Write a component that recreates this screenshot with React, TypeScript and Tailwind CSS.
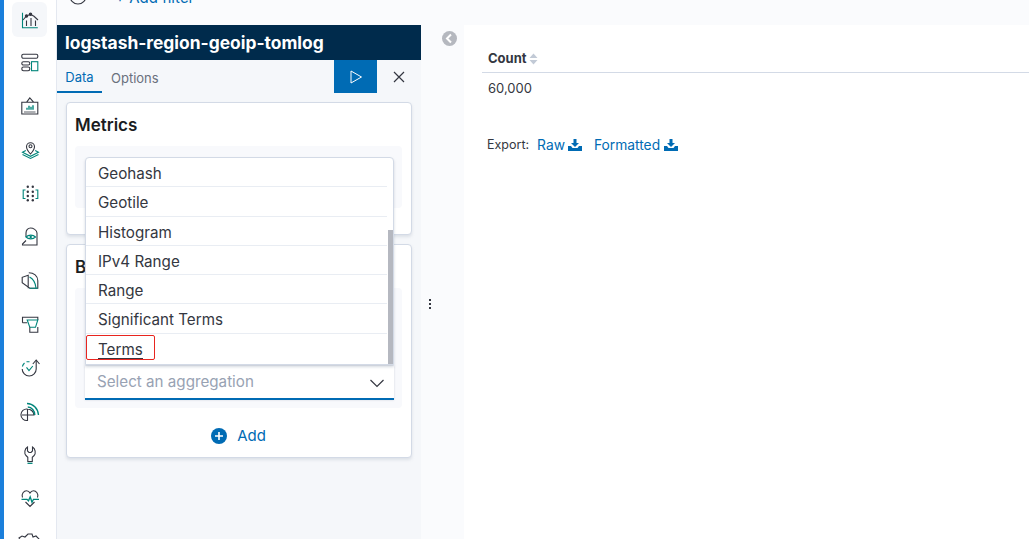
import React from "react";

const D = "#343741";
const T = "#00857a";

function Ic({ children }: { children: React.ReactNode }) {
  return (
    <svg width="24" height="24" viewBox="0 0 24 24" fill="none" strokeWidth="1.1" stroke={D}>
      {children}
    </svg>
  );
}

const icons: React.ReactNode[] = [
  <Ic key="a">
    <path d="M4.500 4.700v15h15.300" stroke={T} />
    <path d="M5 12l3.500-4 4-1.700 3.500 2 4 3.700" />
    <circle cx="8.500" cy="8" r="1.200" fill={D} />
    <circle cx="12.500" cy="6.300" r="1.200" fill={D} />
    <path d="M8.500 12.500V18M13 10v8M17.500 12.500V18" />
  </Ic>,
  <Ic key="b">
    <rect x="3.800" y="3.300" width="16" height="4" rx="1.500" />
    <rect x="3.800" y="10.700" width="8" height="3.300" rx="1.600" />
    <rect x="3.800" y="16" width="8" height="3.700" rx="1.700" />
    <rect x="13.500" y="10.700" width="6.300" height="9" stroke={T} />
  </Ic>,
  <Ic key="c">
    <path d="M3.800 8.300h16V20h-16zM8.500 8.300l3.300-4.500 4 4.500" />
    <path d="M9 15.700v-2M11 15.700v-4M13 15.700v-3M15 15.700v-4.500" stroke={T} strokeWidth="1.400" />
    <path d="M6 18h11.500" strokeWidth="0.800" />
  </Ic>,
  <Ic key="d">
    <path d="M12.500 16c-2.500-2.800-4-4.800-4-7.300a4 4 0 018 0c0 2.500-1.500 4.500-4 7.300z" />
    <circle cx="12.500" cy="8.300" r="1.500" />
    <path d="M7.800 12.500L4.500 14.300l8 4 8-4-3.300-1.800" stroke={T} />
    <path d="M4.500 16.500l8 4 8-4" stroke={T} />
  </Ic>,
  <Ic key="e">
    <g fill={D} stroke="none">
      <circle cx="9.800" cy="4.700" r="1.200" />
      <circle cx="14.800" cy="4.700" r="1.200" />
      <circle cx="9.800" cy="9.800" r="1.200" />
      <circle cx="14.800" cy="9.800" r="1.200" />
      <circle cx="9.800" cy="14" r="1.200" />
      <circle cx="14.800" cy="14" r="1.200" />
      <circle cx="9.800" cy="18.300" r="1.200" />
      <circle cx="14.800" cy="18.300" r="1.200" />
    </g>
    <path d="M7.500 8H5.200v8.500h2.300M17.500 8h2.300v8.500h-2.300" stroke={T} />
  </Ic>,
  <Ic key="f">
    <path d="M8 12V8c0-3 2-5 4.500-5S19 5 19 8v12H4.500v-1L8 15.500" />
    <path d="M8 12c2.500-2.500 7-2.500 9.500 0-2.500 2.500-7 2.500-9.500 0z" stroke={T} />
    <circle cx="12.700" cy="12" r="1.200" fill={T} stroke="none" />
  </Ic>,
  <Ic key="g">
    <path d="M10.800 3.700c5 0 9 3 9 8v7.600h-8l-7.600-5.600V8.300l6-2v13" />
    <path d="M11.500 8c4 2 6 6 6.500 11M11.500 19.300h8.300" stroke={T} />
  </Ic>,
  <Ic key="h">
    <path d="M4.500 9.700V4.300h15.300V7M4.500 9.700h4.700" />
    <path d="M9.200 7h10.600l-2.300 7.300h-5.700z" stroke={T} />
    <path d="M11.800 14.300v5h8V14" />
  </Ic>,
  <Ic key="i">
    <path d="M18.200 4.500V13a7 7 0 01-14 0" />
    <path d="M14.800 8l3.400-4 3.300 4" />
    <path d="M4.400 10.500A7 7 0 016.500 7M8.500 5.700h3" stroke={T} />
    <path d="M8.500 11.300l2.500 3.400 3.800-4.700" stroke={T} />
  </Ic>,
  <Ic key="j">
    <path d="M9.500 9a5.800 5.800 0 100 11.500V15H4M9.500 9v6H16a6.500 6.500 0 00-6.500-6" />
    <path d="M9 3.500c6 0 11 5 11.500 11.500M9.800 7c4 0 7 4 7 8" stroke={T} strokeWidth="1.400" />
  </Ic>,
  <Ic key="k">
    <path d="M9.500 3C6.500 4.500 6 9.500 8 11.500l1.800 1.800v4.200h4.500v-4.200l1.800-1.800C18 9.500 17.500 4.500 14.500 3v4L13 8.500h-2L9.500 7z" />
    <path d="M9.500 19.300h5" stroke={T} strokeWidth="1.300" />
  </Ic>,
  <Ic key="l">
    <path d="M4.500 10.500C3 7 6 3.700 8.500 3.700c1.500 0 2.800.8 3.500 2.300.8-1.500 2-2.300 3.500-2.300C18 3.700 21 7 19.500 10.500M7.500 15l4.500 4.500 4.500-4.500" />
    <path d="M3.500 12.300h5.500l1.500 1.500 1.700-4 1.800 5.500 1.500-3h5.500" stroke={T} strokeWidth="1.300" />
  </Ic>,
  <Ic key="m">
    <path d="M10 3h4l1 3 3-1 3 3-2 3 2 2v3l-3 1 1 3-3 2-3-2-1 3h-4l-1-3-3 2-3-3 2-3-3-1v-4l3-1-2-3 3-2 3 1z" />
  </Ic>,
];

const items = ["Geohash", "Geotile", "Histogram", "IPv4 Range", "Range", "Significant Terms"];

function DownloadIcon({ className }: { className: string }) {
  return (
    <svg width="14" height="12" viewBox="0 0 14 12" fill="#006bb4" className={className}>
      <path d="M5.500 0h3v4H11L7 8 3 4h2.500z" />
      <path d="M0 7h3l1.500 2h5L11 7h3v5H0z" />
    </svg>
  );
}

export default function App() {
  return (
    <div
      className="flex h-[539px] w-[1029px] overflow-hidden bg-[#f5f7fa] text-[14px] text-[#343741]"
      style={{ fontFamily: "Inter, 'Liberation Sans', sans-serif" }}
    >
      <div className="w-[4px] shrink-0 bg-[#1b7fdb]" />
      <nav className="flex h-[539px] w-[53px] shrink-0 flex-col items-center overflow-hidden border-r border-[#e4e8f0] bg-white pr-[1px] pt-[2px]">
        <div className="flex flex-col items-center">
          <div className="flex h-[35px] w-[35px] items-center justify-center rounded-[6px] bg-[#f5f7fa]">
            {icons[0]}
          </div>
          <div className="mt-[13.500px] flex flex-col gap-[19.700px]">{icons.slice(1)}</div>
        </div>
      </nav>

      <div className="flex min-w-0 flex-1 flex-col">
        <div className="relative flex h-[25px] shrink-0 items-end overflow-hidden bg-[#fafbfd]">
          <svg width="18" height="18" viewBox="0 0 18 18" fill="none" stroke={D} className="absolute left-[12px] top-[-13px]">
            <circle cx="9" cy="9" r="8" strokeWidth="1.200" />
            <path d="M9 6v5" strokeWidth="1.200" />
          </svg>
          <span className="absolute left-[58px] top-[-12px] text-[15px] leading-[20px] text-[#006bb4]">+ Add filter</span>
        </div>
        <div className="flex min-h-0 flex-1">
          <aside className="flex w-[364px] shrink-0 flex-col bg-[#f5f7fa]">
            <div className="flex h-[35px] items-center bg-[#002b4c] pl-[8px] pt-[1px] text-[17.400px] font-bold text-white">
              logstash-region-geoip-tomlog
            </div>
            <div className="flex h-[33px] items-stretch">
              <div className="flex h-[33px] w-[45px] items-center justify-center border-b-2 border-[#006bb4] pt-[5px] text-[13px] text-[#006bb4]">
                Data
              </div>
              <div className="ml-[9px] flex items-center pt-[5px] text-[13px] text-[#69707d]">Options</div>
              <div className="ml-auto flex h-[33px] w-[43px] items-center justify-center bg-[#006bb4]">
                <svg width="16" height="16" viewBox="0 0 16 16" fill="none" stroke="#fff" strokeWidth="1">
                  <path d="M3 2l10.500 6L3 14z" />
                </svg>
              </div>
              <div className="flex w-[44px] items-center justify-center">
                <svg width="12" height="12" viewBox="0 0 12 12" fill="none" stroke={D} strokeWidth="1.200">
                  <path d="M1 1l10 10M11 1L1 11" />
                </svg>
              </div>
            </div>

            <div className="relative mt-[9px] flex flex-col gap-[9px] px-[9px]">
              <section className="h-[133px] rounded-[4px] border border-[#d3dae6] bg-white pl-[8px] pr-[9px] shadow-[0_2px_3px_rgba(152,162,179,0.25)]">
                <h2 className="mt-[10px] text-[17px] font-semibold leading-[24px] text-[#1a1c21]">Metrics</h2>
                <div className="mt-[9px] h-[62px] rounded-[4px] bg-[#f8f9fc]" />
              </section>

              <section className="h-[214px] rounded-[4px] border border-[#d3dae6] bg-white pl-[8px] pr-[9px] shadow-[0_2px_3px_rgba(152,162,179,0.25)]">
                <h2 className="mt-[10px] text-[17px] font-semibold leading-[24px] text-[#1a1c21]">Buckets</h2>
                <div className="mt-[9px] flex h-[120px] flex-col justify-end rounded-[4px] bg-[#f8f9fc] pb-[8px] pl-[10px] pr-[8px]">
                  <div className="flex h-[34px] items-center justify-between border-b-2 border-[#006bb4] bg-white pl-[12px] pr-[9px] pt-[1px] shadow-[0_0_2px_rgba(152,162,179,0.4)]">
                    <span className="text-[15.200px] text-[#98a2b3]">Select an aggregation</span>
                    <svg width="16" height="16" viewBox="0 0 16 16" fill="none" stroke={D} strokeWidth="1.200">
                      <path d="M1.500 5l6.500 6.500L14.500 5" />
                    </svg>
                  </div>
                </div>
                <div className="mt-[17px] flex items-center justify-center gap-[10px]">
                  <svg width="16" height="16" viewBox="0 0 16 16">
                    <circle cx="8" cy="8" r="8" fill="#006bb4" />
                    <path d="M8 4v8M4 8h8" stroke="#fff" strokeWidth="1.600" />
                  </svg>
                  <span className="text-[15px] text-[#006bb4]">Add</span>
                </div>
              </section>

              <div className="absolute left-[28px] top-[55px] h-[208px] w-[309px] overflow-hidden rounded-t-[4px] border border-[#d3dae6] bg-white pl-[12px] shadow-[0_2px_3px_rgba(152,162,179,0.4)]">
                <div className="absolute bottom-0 right-0 top-[72px] w-[5px] bg-[#b5b8c0]" />
                <div className="mr-[6px]">
                  {items.map((t) => (
                    <div
                      key={t}
                      className="-ml-[12px] flex h-[29.300px] items-center border-b border-[#e9edf3] pl-[12px] pt-[4.500px] text-[15.200px] text-[#343741]"
                    >
                      {t}
                    </div>
                  ))}
                  <div className="relative flex h-[31px] items-center pt-[3px]">
                    <span className="border-b border-[#343741] text-[15.200px] leading-[16px]">Terms</span>
                    <div className="absolute left-[-12px] top-[1px] h-[25px] w-[69px] rounded-[2px] border border-[#e8251f]" />
                  </div>
                </div>
              </div>
            </div>
          </aside>

          <div className="relative w-[43px] shrink-0 bg-[#fafbfd]">
            <svg width="15" height="15" viewBox="0 0 15 15" className="absolute left-[21px] top-[6px]">
              <circle cx="7.500" cy="7.500" r="7.500" fill="#b5b8bf" />
              <path d="M9 3.500l-4 4 4 4" fill="none" stroke="#fff" strokeWidth="2" />
            </svg>
            <div className="absolute left-[8px] top-[274px] flex flex-col gap-[2px]">
              <span className="h-[2px] w-[2px] bg-[#343741]" />
              <span className="h-[2px] w-[2px] bg-[#343741]" />
              <span className="h-[2px] w-[2px] bg-[#343741]" />
            </div>
          </div>

          <main className="min-w-0 flex-1 bg-white pl-[18px] pt-[24px]">
            <div className="flex h-[24px] items-center border-b border-[#d3dae6] pb-[3px] pl-[6px]">
              <span className="text-[13px] font-bold text-[#343741]">Count</span>
              <svg width="9" height="12" viewBox="0 0 9 12" fill="#c2cad6" className="ml-[2px]">
                <path d="M4.500 0.500L8.500 5h-8zM4.500 11.500L0.500 7h8z" />
              </svg>
            </div>
            <div className="mt-[5px] pl-[6px] text-[13px] leading-[20px]">60,000</div>
            <div className="mt-[37px] flex items-center pl-[5px] text-[12.500px] leading-[20px]">
              <span>Export:</span>
              <span className="ml-[8px] text-[13.800px] text-[#006bb4]">Raw</span>
              <DownloadIcon className="ml-[3px]" />
              <span className="ml-[12px] text-[13.800px] text-[#006bb4]">Formatted</span>
              <DownloadIcon className="ml-[4px]" />
            </div>
          </main>
        </div>
      </div>
    </div>
  );
}
